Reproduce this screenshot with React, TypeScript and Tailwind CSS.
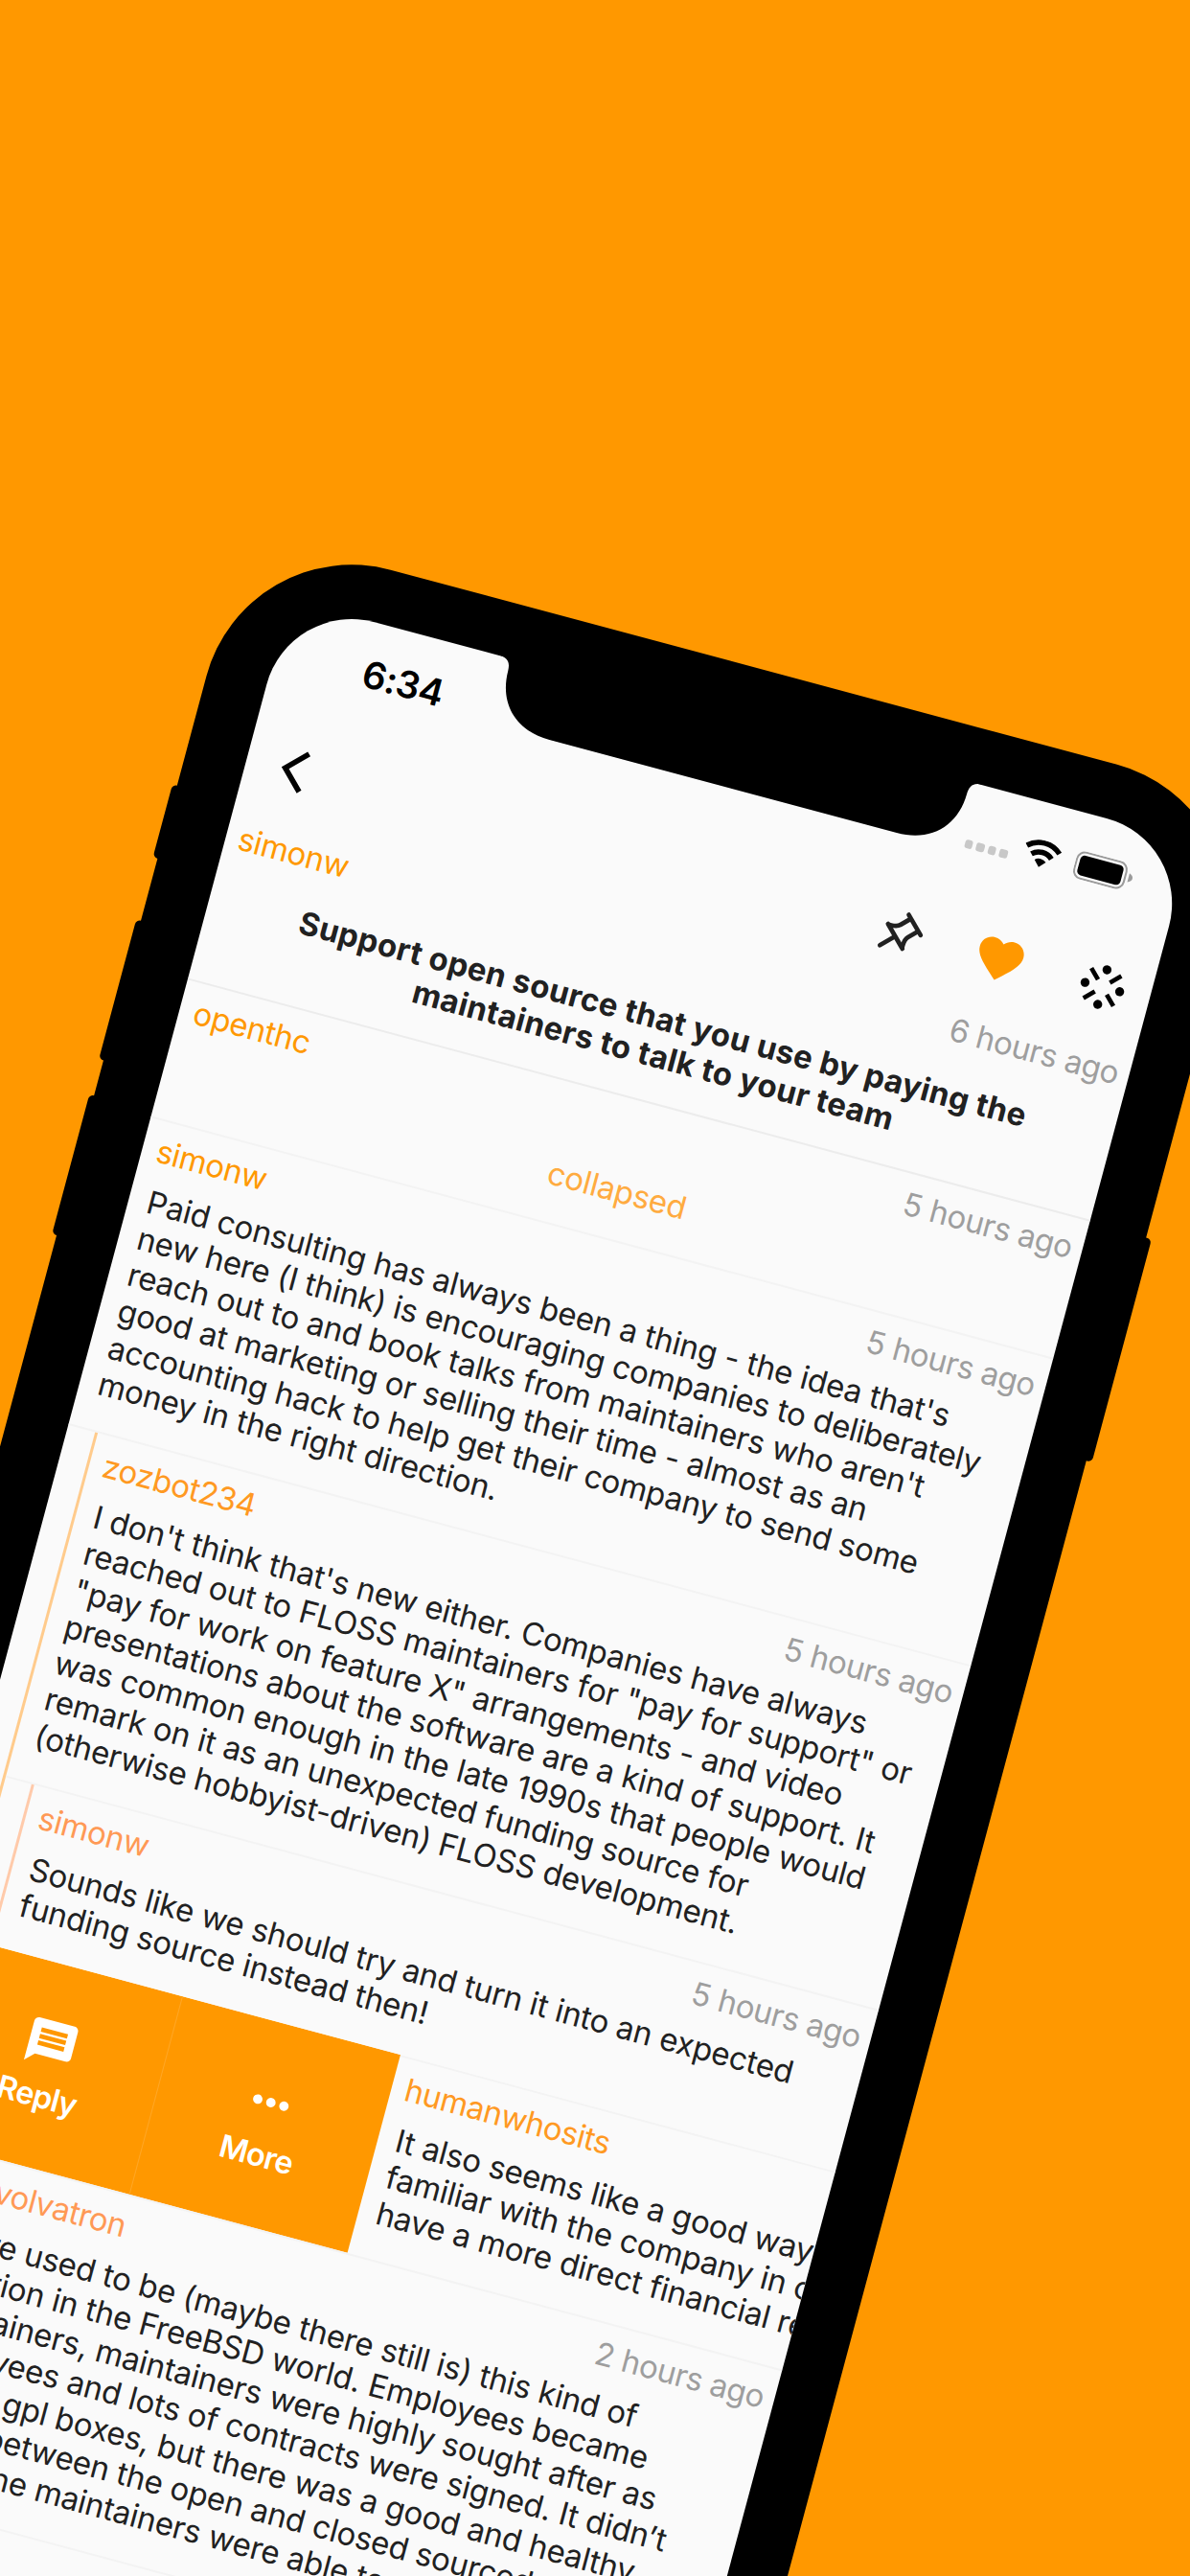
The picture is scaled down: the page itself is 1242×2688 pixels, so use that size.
import type { ReactNode } from "react";

type Depth = 0 | 1 | 2;

type CommentProps = {
  author: string;
  age?: string;
  lines: string[];
  depth: Depth;
  children?: ReactNode;
};

const nameColor = {
  0: "text-[#ff9800]",
  1: "text-[#ff9922]",
  2: "text-[#ff9955]",
};

const railStyle = {
  0: "",
  1: "ml-[29.6px] border-l-[3px] border-[#ffcb8c]",
  2: "ml-[27.3px] border-l-[3px] border-[#ffcaaa]",
};

function Divider() {
  return <div className="h-[2px] bg-[#f3f3f3]" />;
}

function MetaRow({ author, age, depth }: { author: string; age?: string; depth: Depth }) {
  return (
    <div
      className={`flex h-[39.3px] justify-between pr-[11px] leading-[39.3px] ${
        depth === 0 ? "pl-[15.7px]" : "pl-[14px]"
      }`}
    >
      <span className={`tracking-[-0.4px] ${nameColor[depth]}`}>{author}</span>
      {age && <span className="tracking-[-0.4px] text-[#9e9e9e]">{age}</span>}
    </div>
  );
}

function Body({ lines, depth }: { lines: string[]; depth: Depth }) {
  return (
    <div
      className={`mt-[14.5px] leading-[39.25px] tracking-[-0.21px] whitespace-pre text-[#212121] ${
        depth === 0 ? "pl-[20px]" : "pl-[18.5px]"
      }`}
    >
      {lines.map((line) => (
        <p key={line} className="h-[39.25px]">
          {line}
        </p>
      ))}
    </div>
  );
}

function Comment({ author, age, lines, depth, children }: CommentProps) {
  return (
    <div>
      <Divider />
      <div className={railStyle[depth]}>
        <div className="pt-[11.9px] pb-[29.2px]">
          <MetaRow author={author} age={age} depth={depth} />
          <Body lines={lines} depth={depth} />
        </div>
        {children}
      </div>
    </div>
  );
}

function SwipeAction({ label, children, divided }: { label: string; children: ReactNode; divided?: boolean }) {
  return (
    <div
      className={`flex w-[236.6px] shrink-0 flex-col items-center justify-center gap-[8.5px] text-white ${
        divided ? "border-l border-[#ffa726]" : ""
      }`}
    >
      <svg viewBox="0 0 24 24" className="size-[56.5px]" fill="currentColor">
        {children}
      </svg>
      <span className="-ml-[2px] h-[39.3px] text-[32.5px] leading-[39.3px] font-semibold tracking-[-0.8px]">
        {label}
      </span>
    </div>
  );
}

function SwipedComment() {
  return (
    <div className="flex w-[975.2px] overflow-hidden">
      <div className="z-10 flex w-[505.7px] shrink-0 justify-end bg-[#ff9800]">
        <SwipeAction label="Reply">
          <path d="M20 2H4c-1.1 0-1.99.9-1.99 2L2 22l4-4h14c1.1 0 2-.9 2-2V4c0-1.1-.9-2-2-2zm-2 12H6v-2h12v2zm0-3H6V9h12v2zm0-3H6V6h12v2z" />
        </SwipeAction>
        <SwipeAction label="More" divided>
          <circle cx="6" cy="12" r="2.1" />
          <circle cx="12" cy="12" r="2.1" />
          <circle cx="18" cy="12" r="2.1" />
        </SwipeAction>
      </div>
      <div className="w-[975.2px] shrink-0">
        <Divider />
        <div className="pt-[11.4px] pb-[28.6px]">
          <MetaRow author="humanwhosits" depth={1} />
          <Body
            depth={1}
            lines={[
              "It also seems like a good way to get",
              "familiar with the company in order to",
              "have a more direct financial relationship",
            ]}
          />
        </div>
      </div>
    </div>
  );
}

function StatusBar() {
  return (
    <div className="flex h-[108px] items-center justify-between pr-[48.8px] pl-[94.5px]">
      <span className="text-[39px] leading-none font-semibold tracking-[-0.5px] text-black">6:34</span>
      <div className="flex items-center">
        <div className="flex gap-[4.3px] pt-[20px]">
          {[0, 1, 2, 3].map((i) => (
            <span key={i} className="size-[8.2px] rounded-[2.6px] bg-[#c8c8c8]" />
          ))}
        </div>
        <svg viewBox="0 0 39 29" className="ml-[15px] h-[29px] w-[39px]" fill="none" stroke="#000" strokeWidth="5.6">
          <path d="M1.9 9.7A25.8 25.8 0 0 1 37.1 9.7" />
          <path d="M8.7 17.05A15.8 15.8 0 0 1 30.3 17.05" />
          <path d="M19.5 28.6L13.4 22A9 9 0 0 1 25.6 22Z" fill="#000" stroke="none" />
        </svg>
        <svg viewBox="0 0 63 30" className="ml-[16.5px] h-[30px] w-[63px]">
          <rect x="1" y="1" width="53.4" height="28" rx="8.4" fill="none" stroke="#9b9b9b" strokeWidth="2" />
          <rect x="4.4" y="4.4" width="46.6" height="21.2" rx="4.6" />
          <path d="M58 10.2Q62.3 12 62.3 15Q62.3 18 58 19.8Z" fill="#9b9b9b" />
        </svg>
      </div>
    </div>
  );
}

function AppBar() {
  return (
    <div className="mt-[12px] flex h-[103.5px] items-center pr-[22.5px] pl-[33.7px]">
      <svg viewBox="0 0 24 24" className="size-[54.2px]" fill="#000">
        <path d="M11.67 3.87L9.9 2.1 0 12l9.9 9.9 1.77-1.77L3.54 12z" transform="translate(1.9)" />
      </svg>
      <div className="flex-1" />
      <svg
        viewBox="0 0 56 56"
        className="size-[56px]"
        fill="none"
        stroke="#212121"
        strokeWidth="4.7"
        strokeLinecap="round"
        strokeLinejoin="round"
      >
        <g transform="translate(39.3 16.4) rotate(45)">
          <path d="M-12.3 0H12.3M-7.6 0V12.5C-7.6 17.5 -10.6 19.5 -14 23.5M7.6 0V12.5C7.6 17.5 10.6 19.5 14 23.5M-15 23.5H15M0 23.5V42" />
        </g>
      </svg>
      <svg viewBox="0 0 24 24" className="ml-[49.6px] size-[56.5px]" fill="#ff9800">
        <path d="M12 21.35l-1.45-1.32C5.4 15.36 2 12.28 2 8.5 2 5.42 4.42 3 7.5 3c1.74 0 3.41.81 4.5 2.09C13.09 3.81 14.76 3 16.5 3 19.58 3 22 5.42 22 8.5c0 3.78-3.4 6.86-8.55 11.54L12 21.35z" />
      </svg>
      <svg viewBox="-28.25 -28.25 56.5 56.5" className="ml-[54.7px] size-[56.5px]">
        <circle cx="0" cy="-18.7" r="4.7" />
        <circle cx="18.7" cy="0" r="4.7" />
        <circle cx="0" cy="18.7" r="4.7" />
        <circle cx="-18.7" cy="0" r="4.7" />
        <path
          d="M-16.2 -16.2L-6.4 -6.4M16.2 -16.2L6.4 -6.4M-16.2 16.2L-6.4 6.4M16.2 16.2L6.4 6.4"
          stroke="#000"
          strokeWidth="4.7"
        />
      </svg>
    </div>
  );
}

function Story() {
  return (
    <div>
      <div className="-ml-[2px] pt-[12.4px]">
        <MetaRow author="simonw" age="6 hours ago" depth={0} />
      </div>
      <h1 className="mt-[28px] h-[106.5px] pl-[5px] text-center leading-[39px] font-bold tracking-[0.32px] text-[#212121]">
        Support open source that you use by paying the
        <br />
        maintainers to talk to your team
      </h1>
    </div>
  );
}

function CollapsedComment() {
  return (
    <div>
      <div className="h-[2px] bg-[#ececec]" />
      <div className="pt-[11.8px] pb-[30.4px]">
        <MetaRow author="openthc" age="5 hours ago" depth={0} />
        <p className="mt-[26px] h-[39.3px] pl-[5px] text-center leading-[39.3px] tracking-[-0.2px] text-[#ffab40]">
          collapsed
        </p>
      </div>
    </div>
  );
}

function Notch() {
  return (
    <svg viewBox="0 -4 975.2 76" className="absolute top-[-4px] left-0 h-[76px] w-[975.2px]">
      <path d="M226 -4V-0.4C236 -0.4 239.5 4 239.7 13C240 48 263 71.4 300 71.4H675.2C712.2 71.4 735.2 48 735.5 13C735.7 4 739.2 -0.4 749.2 -0.4V-4Z" />
    </svg>
  );
}

export default function App() {
  return (
    <div className="relative h-[2688px] w-[1242px] overflow-hidden bg-[#ff9800] font-['Inter',sans-serif] text-[33px]">
      <div className="absolute top-[554px] left-[255.6px] h-[2400px] w-[1099.4px] origin-top-left rotate-[15deg]">
        <div className="absolute top-[275px] left-[-5px] h-[79px] w-[30px] rounded-[5px] bg-black" />
        <div className="absolute top-[421px] left-[-5px] h-[151px] w-[30px] rounded-[5px] bg-black" />
        <div className="absolute top-[610px] left-[-5px] h-[151px] w-[30px] rounded-[5px] bg-black" />
        <div className="absolute top-[468.5px] right-[-6px] h-[241px] w-[30px] rounded-[5px] bg-black" />
        <div className="relative h-full rounded-t-[157px] bg-black px-[62.2px] pt-[56.5px]">
          <div className="relative ml-[0.5px] w-[975.2px]">
            <div className="h-[2340px] overflow-hidden rounded-t-[92px] bg-[#fafafa]">
              <StatusBar />
              <AppBar />
              <Story />
              <CollapsedComment />
              <Comment
                depth={0}
                author="simonw"
                age="5 hours ago"
                lines={[
                  "Paid consulting has always been a thing - the idea that's",
                  "new here (I think) is encouraging companies to deliberately",
                  "reach out to and book talks from maintainers who aren't",
                  "good at marketing or selling their time - almost as an",
                  "accounting hack to help get their company to send some",
                  "money in the right direction.",
                ]}
              >
                <Comment
                  depth={1}
                  author="zozbot234"
                  age="5 hours ago"
                  lines={[
                    "I don't think that's new either. Companies have always",
                    'reached out to FLOSS maintainers for "pay for support" or',
                    '"pay for work on feature X" arrangements - and video',
                    "presentations about the software are a kind of support. It",
                    "was common enough in the late 1990s that people would",
                    "remark on it as an unexpected funding source for",
                    "(otherwise hobbyist-driven) FLOSS development.",
                  ]}
                >
                  <Comment
                    depth={2}
                    author="simonw"
                    age="5 hours ago"
                    lines={["Sounds like we should try and turn it into an expected", "funding source instead then!"]}
                  />
                </Comment>
                <SwipedComment />
                <div className="ml-[29.6px] border-l-[3px] border-[#ffcb8c]">
                  <Comment
                    depth={2}
                    author="convolvatron"
                    age="2 hours ago"
                    lines={[
                      "There used to be (maybe there still is) this kind of",
                      "situation in the FreeBSD world. Employees became",
                      "maintainers, maintainers were highly sought after as",
                      "employees and lots of contracts were signed. It didn’t",
                      "involve gpl boxes, but there was a good and healthy",
                      "bridge between the open and closed sourced",
                      "world. The maintainers were able to",
                    ]}
                  />
                </div>
                <Divider />
              </Comment>
            </div>
            <Notch />
          </div>
        </div>
      </div>
    </div>
  );
}
